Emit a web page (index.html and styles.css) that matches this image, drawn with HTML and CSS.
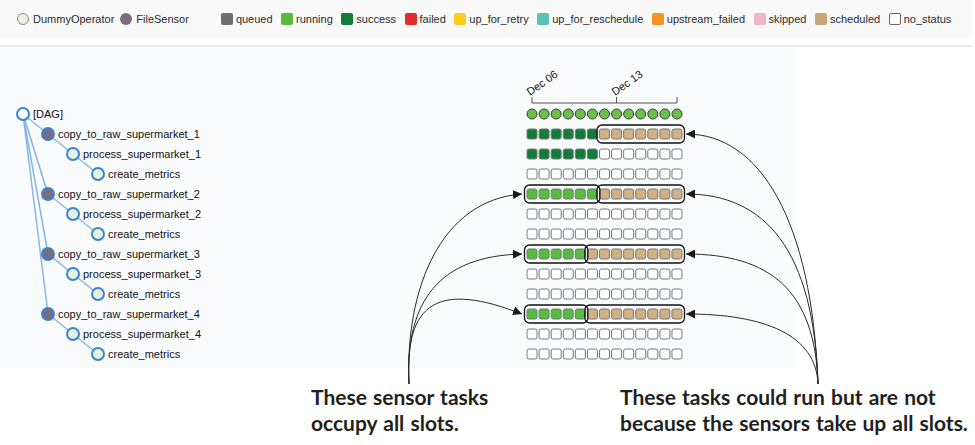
FILE: index.html
```html
<!DOCTYPE html>
<html lang="en">
  <head>
    <meta charset="UTF-8" />
    <meta name="viewport" content="width=device-width, initial-scale=1.0" />
    <title>Tree View - sensor slots</title>
    <link rel="stylesheet" href="styles.css">
  </head>
  <body>
    <div class="legend-bar">
      <div class="legend-ops">
        <span class="op"><i class="op-dot dummy"></i>DummyOperator</span>
        <span class="op"><i class="op-dot sensor"></i>FileSensor</span>
      </div>
      <div class="legend-states">
        <span class="state"><i class="sq queued"></i>queued</span>
        <span class="state"><i class="sq running"></i>running</span>
        <span class="state"><i class="sq success"></i>success</span>
        <span class="state"><i class="sq failed"></i>failed</span>
        <span class="state"><i class="sq up_for_retry"></i>up_for_retry</span>
        <span class="state"><i class="sq up_for_reschedule"></i>up_for_reschedule</span>
        <span class="state"><i class="sq upstream_failed"></i>upstream_failed</span>
        <span class="state"><i class="sq skipped"></i>skipped</span>
        <span class="state"><i class="sq scheduled"></i>scheduled</span>
        <span class="state"><i class="sq none"></i>no_status</span>
      </div>
    </div>
    <div class="rule"></div>

    <div class="view">
      <svg id="tree" width="795" height="321" viewBox="0 47 795 321">
        <g id="links"></g>
        <g id="nodes"></g>
        <g id="dates">
          <text class="date" transform="translate(530 96) rotate(-35)">Dec 06</text>
          <text class="date" transform="translate(615 96) rotate(-35)">Dec 13</text>
          <path class="axis" d="M532 97 V103 H677 V97 M616.5 103 V97" />
        </g>
        <g id="grid"></g>
        <g id="boxes"></g>
      </svg>
    </div>

    <div class="notes">
      <p class="note note-left">These sensor tasks<br>occupy all slots.</p>
      <p class="note note-right">These tasks could run but are not<br>because the sensors take up all slots.</p>
    </div>

    <!-- callout arrows drawn over the screenshot -->
    <svg class="arrows" width="975" height="445">
      <defs>
        <marker id="head" viewBox="0 0 10 10" refX="10" refY="5" markerWidth="9" markerHeight="9" markerUnits="userSpaceOnUse" orient="auto">
          <path d="M0 0 L10 5 L0 10 z" />
        </marker>
      </defs>
      <path d="M409 384 C405 290 440 200 522 194" />
      <path d="M409 384 C405 300 440 256 522 254" />
      <path d="M409 384 C404 300 440 282 522 314" />
      <path d="M818 384 C812 220 760 134 686 134" />
      <path d="M818 384 C814 250 765 194 686 194" />
      <path d="M818 384 C815 290 770 254 686 254" />
      <path d="M818 384 C816 335 765 314 686 314" />
    </svg>

    <script src="script.js"></script>
  </body>
</html>
```

FILE: styles.css
```css
body {
  margin: 0;
  width: 975px;
  height: 445px;
  overflow: hidden;
  position: relative;
  background-color: #fff;
  font-family: "Liberation Sans", Arial, sans-serif;
  font-size: 11px;
  color: #2b2b2b;
}

/* legend */
.legend-bar {
  display: flex;
  align-items: center;
  width: 972px;
  height: 38px;
  padding-left: 17px;
  box-sizing: border-box;
  background-color: #f9f9f9;
}
.legend-ops {
  display: flex;
  gap: 6px;
}
.op,
.state {
  display: flex;
  align-items: center;
}
.op-dot {
  width: 12px;
  height: 12px;
  border-radius: 50%;
  margin-right: 4px;
  box-sizing: border-box;
}
.op-dot.dummy {
  background-color: #e4f2de;
  border: 1px solid #888;
}
.op-dot.sensor {
  background-color: #7a6c7c;
}
.legend-states {
  display: flex;
  gap: 8.5px;
  margin-left: 32px;
}
.sq {
  width: 12px;
  height: 12px;
  border-radius: 2px;
  margin-right: 3px;
  box-sizing: border-box;
}
.sq.queued { background-color: #6e6e6e; }
.sq.running { background-color: #58bb3f; }
.sq.success { background-color: #137b3a; }
.sq.failed { background-color: #e52a2a; }
.sq.up_for_retry { background-color: #fecd1a; }
.sq.up_for_reschedule { background-color: #5bc0b5; }
.sq.upstream_failed { background-color: #f7931e; }
.sq.skipped { background-color: #f5b3c8; }
.sq.scheduled { background-color: #c9a679; }
.sq.none {
  background-color: #fff;
  border: 1px solid #666;
}

.rule {
  width: 972px;
  height: 2px;
  margin-top: 7px;
  background-color: #ebebeb;
}

/* tree view */
.view {
  width: 795px;
  height: 321px;
  background-color: #fafbfd;
}
#tree {
  display: block;
}
.link {
  stroke: #86b6e6;
  stroke-width: 1.5;
}
.node {
  stroke: #3b83cf;
  stroke-width: 2;
}
.node.dag { fill: #fff; }
.node.sensor { fill: #7a6c7c; }
.node.dummy { fill: #e5f3df; }
.label,
.date {
  font-family: "Liberation Sans", Arial, sans-serif;
  font-size: 11px;
  fill: #111;
}
.axis {
  fill: none;
  stroke: #555;
  stroke-width: 1;
}
.dagrun {
  fill: #6cc14a;
  stroke: #3a3a3a;
  stroke-width: 1;
}
.ti {
  stroke: #6f7d7d;
  stroke-width: 1;
}
.ti.success { fill: #137b3a; }
.ti.running { fill: #58bb3f; }
.ti.scheduled { fill: #d3b083; }
.ti.none { fill: #fff; }
.group {
  fill: none;
  stroke: #111;
  stroke-width: 1.3;
}

/* annotations */
.notes {
  display: flex;
  margin-top: 16px;
  padding-left: 311px;
}
.note {
  margin: 0;
  font-family: Lato, "Open Sans", sans-serif;
  font-weight: 700;
  font-size: 21px;
  line-height: 26px;
  word-spacing: 1px;
  color: #231f20;
}
.note-left {
  width: 309px;
}

.arrows {
  position: absolute;
  top: 0;
  left: 0;
  pointer-events: none;
}
.arrows path {
  fill: none;
  stroke: #2a2a2a;
  stroke-width: 1;
  marker-end: url(#head);
}
.arrows marker path {
  fill: #1a1a1a;
  stroke: none;
}
```

FILE: script.js
```js
// tree view: task rows on the left, run squares on the right
const ROW_TOP = 114;
const ROW_H = 20;
const DEPTH_X = [23, 48, 73, 98];
const COL_X = 532;
const COL_W = 12.08;
const COLS = 13;

const tasks = [
  { name: "[DAG]", depth: 0, parent: null, kind: "dag" },
  { name: "copy_to_raw_supermarket_1", depth: 1, parent: 0, kind: "sensor",
    runs: [["success", 6], ["scheduled", 7]], boxes: [[6, 12]] },
  { name: "process_supermarket_1", depth: 2, parent: 1, kind: "dummy",
    runs: [["success", 6], ["none", 7]] },
  { name: "create_metrics", depth: 3, parent: 2, kind: "dummy" },
  { name: "copy_to_raw_supermarket_2", depth: 1, parent: 0, kind: "sensor",
    runs: [["running", 6], ["scheduled", 7]], boxes: [[0, 5], [6, 12]] },
  { name: "process_supermarket_2", depth: 2, parent: 4, kind: "dummy" },
  { name: "create_metrics", depth: 3, parent: 5, kind: "dummy" },
  { name: "copy_to_raw_supermarket_3", depth: 1, parent: 0, kind: "sensor",
    runs: [["running", 5], ["scheduled", 8]], boxes: [[0, 4], [5, 12]] },
  { name: "process_supermarket_3", depth: 2, parent: 7, kind: "dummy" },
  { name: "create_metrics", depth: 3, parent: 8, kind: "dummy" },
  { name: "copy_to_raw_supermarket_4", depth: 1, parent: 0, kind: "sensor",
    runs: [["running", 5], ["scheduled", 8]], boxes: [[0, 4], [5, 12]] },
  { name: "process_supermarket_4", depth: 2, parent: 10, kind: "dummy" },
  { name: "create_metrics", depth: 3, parent: 11, kind: "dummy" },
];

const ns = "http://www.w3.org/2000/svg";

function add(group, tag, attrs, text) {
  const node = document.createElementNS(ns, tag);
  Object.entries(attrs).forEach(([k, v]) => node.setAttribute(k, v));
  if (text) node.textContent = text;
  document.getElementById(group).appendChild(node);
}

const rowY = (i) => ROW_TOP + i * ROW_H;
const colX = (j) => COL_X + j * COL_W;

tasks.forEach((task, i) => {
  const x = DEPTH_X[task.depth];
  const y = rowY(i);

  if (task.parent !== null) {
    const p = tasks[task.parent];
    add("links", "line", { x1: DEPTH_X[p.depth], y1: rowY(task.parent), x2: x, y2: y, class: "link" });
  }
  add("nodes", "circle", { cx: x, cy: y, r: 6, class: "node " + task.kind });
  add("nodes", "text", { x: x + 10, y: y + 4, class: "label" }, task.name);

  // dag runs row
  if (i === 0) {
    for (let j = 0; j < COLS; j++) {
      add("grid", "circle", { cx: colX(j), cy: y, r: 5, class: "dagrun" });
    }
    return;
  }

  const states = [];
  (task.runs || [["none", COLS]]).forEach(([state, n]) => {
    for (let k = 0; k < n; k++) states.push(state);
  });
  states.forEach((state, j) => {
    add("grid", "rect", { x: colX(j) - 5, y: y - 5, width: 10, height: 10, rx: 2, class: "ti " + state });
  });

  (task.boxes || []).forEach(([a, b]) => {
    add("boxes", "rect", {
      x: colX(a) - 7.5, y: y - 9, width: colX(b) - colX(a) + 15, height: 18, rx: 5, class: "group",
    });
  });
});
```
